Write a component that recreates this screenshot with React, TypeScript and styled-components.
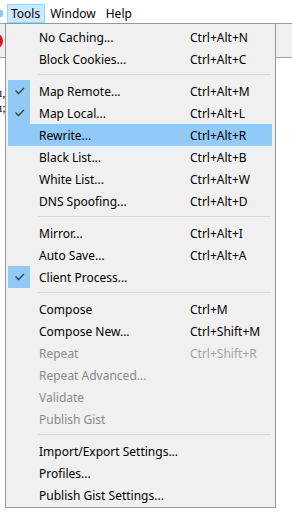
import styled, { createGlobalStyle } from "styled-components";

const Global = createGlobalStyle`
  body {
    margin: 0;
    background: #ffffff;
    font-family: "Noto Sans", "Open Sans", sans-serif;
    overflow: hidden;
  }
`;

type Item = {
  label: string;
  shortcut?: string;
  checked?: boolean;
  active?: boolean;
  disabled?: boolean;
};

const groups: Item[][] = [
  [
    { label: "No Caching...", shortcut: "Ctrl+Alt+N" },
    { label: "Block Cookies...", shortcut: "Ctrl+Alt+C" },
  ],
  [
    { label: "Map Remote...", shortcut: "Ctrl+Alt+M", checked: true },
    { label: "Map Local...", shortcut: "Ctrl+Alt+L", checked: true },
    { label: "Rewrite...", shortcut: "Ctrl+Alt+R", active: true },
    { label: "Black List...", shortcut: "Ctrl+Alt+B" },
    { label: "White List...", shortcut: "Ctrl+Alt+W" },
    { label: "DNS Spoofing...", shortcut: "Ctrl+Alt+D" },
  ],
  [
    { label: "Mirror...", shortcut: "Ctrl+Alt+I" },
    { label: "Auto Save...", shortcut: "Ctrl+Alt+A" },
    { label: "Client Process...", checked: true },
  ],
  [
    { label: "Compose", shortcut: "Ctrl+M" },
    { label: "Compose New...", shortcut: "Ctrl+Shift+M" },
    { label: "Repeat", shortcut: "Ctrl+Shift+R", disabled: true },
    { label: "Repeat Advanced...", disabled: true },
    { label: "Validate", disabled: true },
    { label: "Publish Gist", disabled: true },
  ],
  [
    { label: "Import/Export Settings..." },
    { label: "Profiles..." },
    { label: "Publish Gist Settings..." },
  ],
];

export default function App() {
  return (
    <>
      <Global />
      <Page>
        <MenuBar>
          <AppIcon />
          <MenuTitle $open>Tools</MenuTitle>
          <MenuTitle>Window</MenuTitle>
          <MenuTitle>Help</MenuTitle>
        </MenuBar>
        <Toolbar>
          <RecordButton />
        </Toolbar>
        <Content>
          <Fragment>ı,</Fragment>
          <Fragment>ı;</Fragment>
        </Content>

        <Dropdown>
          {groups.map((g, gi) => (
            <div key={gi}>
              {gi > 0 && <Separator />}
              {g.map((it) => (
                <Row key={it.label} $active={!!it.active}>
                  <CheckCell $checked={!!it.checked && !it.active}>
                    {it.checked && (
                      <svg width="22" height="22" viewBox="0 0 22 22">
                        <polyline
                          points="7.5,10.5 10.5,13.5 16,8"
                          fill="none"
                          stroke="#3c3c3c"
                          strokeWidth="1.3"
                        />
                      </svg>
                    )}
                  </CheckCell>
                  <Label $disabled={!!it.disabled}>{it.label}</Label>
                  <Shortcut $disabled={!!it.disabled}>{it.shortcut}</Shortcut>
                </Row>
              ))}
            </div>
          ))}
        </Dropdown>
      </Page>
    </>
  );
}

const Page = styled.div`
  position: relative;
  width: 292px;
  height: 528px;
  overflow: hidden;
  background: #fff;
`;

const MenuBar = styled.div`
  display: flex;
  align-items: center;
  height: 23px;
  box-sizing: border-box;
  padding-top: 3px;
  font-size: 12px;
  color: #000;
`;

const AppIcon = styled.span`
  width: 3px;
  height: 7px;
  margin: 0 4px 0 0;
  background: #8cc4ee;
  border-radius: 0 2px 2px 0;
`;

const MenuTitle = styled.div<{ $open?: boolean }>`
  height: 19px;
  line-height: 17px;
  box-sizing: border-box;
  padding: 0 4px 0 3px;
  border: 1px solid ${(p) => (p.$open ? "#99d1ff" : "transparent")};
  background: ${(p) => (p.$open ? "#cce8ff" : "transparent")};
  margin-right: 1px;
`;

const Toolbar = styled.div`
  display: flex;
  align-items: center;
  height: 35px;
  box-sizing: border-box;
  border-top: 1px solid #a0a0a0;
  border-bottom: 1px solid #a0a0a0;
  background: #f0f0f0;
`;

const RecordButton = styled.span`
  width: 16px;
  height: 16px;
  margin-left: -13px;
  border-radius: 50%;
  background: #e81123;
`;

const Content = styled.div`
  display: flex;
  flex-direction: column;
  padding-top: 28px;
  font-family: "Liberation Serif", serif;
  font-size: 12px;
  line-height: 15px;
`;

const Fragment = styled.span`
  margin-left: -1px;
`;

const Dropdown = styled.div`
  position: absolute;
  left: 5px;
  top: 23px;
  width: 271px;
  box-sizing: border-box;
  border: 1px solid #979797;
  background: #f0f0f0;
  padding: 2px 2px 1px 2px;
  font-size: 12px;
`;

const Separator = styled.div`
  height: 1px;
  margin: 4px 2px 5px 30px;
  background: #d7d7d7;
`;

const Row = styled.div<{ $active: boolean }>`
  display: grid;
  grid-template-columns: 22px 151px 1fr;
  column-gap: 9px;
  align-items: center;
  height: 22px;
  margin-right: 1px;
  background: ${(p) => (p.$active ? "#91c9f7" : "transparent")};
`;

const CheckCell = styled.div<{ $checked: boolean }>`
  width: 22px;
  height: 22px;
  background: ${(p) => (p.$checked ? "#91c9f7" : "transparent")};
  svg {
    display: block;
  }
`;

const Label = styled.span<{ $disabled: boolean }>`
  color: ${(p) => (p.$disabled ? "#8a8a8a" : "#000")};
  white-space: nowrap;
`;

const Shortcut = styled.span<{ $disabled: boolean }>`
  color: ${(p) => (p.$disabled ? "#a3a3a3" : "#000")};
  margin-left: -9px;
  white-space: nowrap;
`;
